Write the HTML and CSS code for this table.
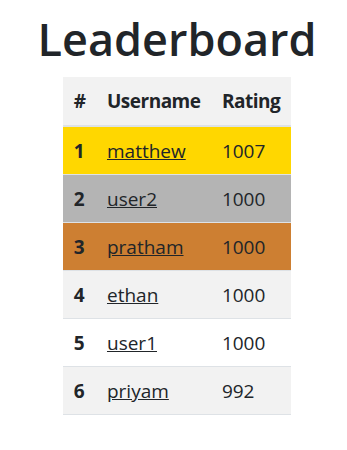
FILE: index.html
```html
<!DOCTYPE html>
<html>
<head>
<meta charset="utf-8">
<link rel="stylesheet" href="styles.css">
</head>
<body>
<div class="page">
  <h1 class="title">Leaderboard</h1>
  <table class="board">
    <thead>
      <tr><th>#</th><th>Username</th><th>Rating</th></tr>
    </thead>
    <tbody>
      <tr class="gold"><th>1</th><td><a href="#">matthew</a></td><td>1007</td></tr>
      <tr class="silver"><th>2</th><td><a href="#">user2</a></td><td>1000</td></tr>
      <tr class="bronze"><th>3</th><td><a href="#">pratham</a></td><td>1000</td></tr>
      <tr class="stripe"><th>4</th><td><a href="#">ethan</a></td><td>1000</td></tr>
      <tr><th>5</th><td><a href="#">user1</a></td><td>1000</td></tr>
      <tr class="stripe"><th>6</th><td><a href="#">priyam</a></td><td>992</td></tr>
    </tbody>
  </table>
</div>
</body>
</html>
```
FILE: styles.css
```css
html, body { margin: 0; padding: 0; background: #fff; }
body {
  font-family: "Open Sans", "Noto Sans", sans-serif;
  color: #212529;
  font-size: 19px;
  line-height: 24px;
}
.page {
  display: flex;
  flex-direction: column;
  align-items: center;
  padding: 10px 0 0 7px;
}
.title {
  margin: 0 0 9px;
  font-size: 45px;
  font-weight: 600;
  line-height: 58px;
}
.board {
  border-collapse: collapse;
  background: #fff;
}
.board th, .board td {
  padding: 12px 10.7px 11px;
  border-top: 1px solid #dee2e6;
  text-align: left;
  vertical-align: top;
}
.board thead th {
  border-top: none;
  border-bottom: 2px solid #dee2e6;
  vertical-align: bottom;
  font-weight: 700;
  letter-spacing: -0.5px;
  padding-bottom: 12px;
}
.board thead tr { background: #f2f2f2; }
.board tbody tr:last-child td, .board tbody tr:last-child th { border-bottom: 1px solid #dee2e6; }
.board a { color: #212529; text-decoration: underline; }
.gold { background: #ffd700; }
.silver { background: #b4b4b4; }
.bronze { background: #cd7f32; }
.stripe { background: #f2f2f2; }
```
